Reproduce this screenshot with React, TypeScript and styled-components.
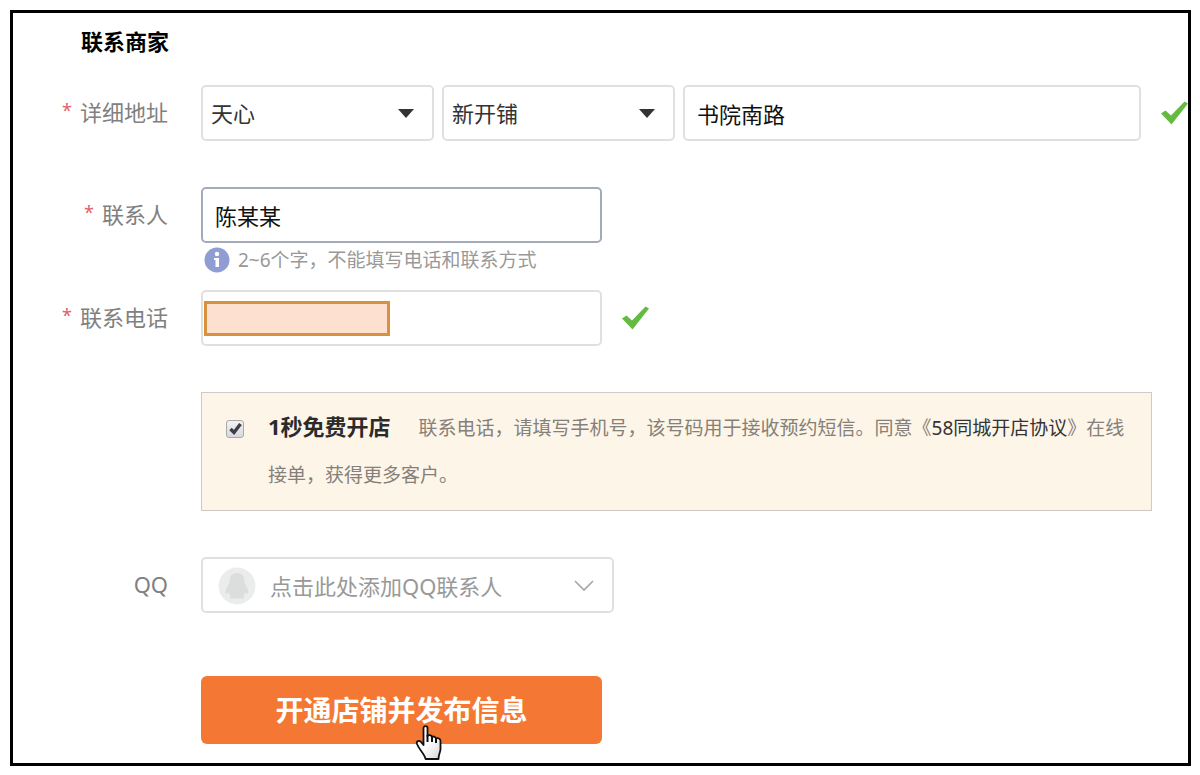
import React from "react";
import styled, { createGlobalStyle } from "styled-components";

const Global = createGlobalStyle`
  *, *::before, *::after { box-sizing: border-box; }
  body {
    margin: 0;
    background: #fff;
    font-family: "Noto Sans", "Noto Sans CJK SC", sans-serif;
    font-size: 22px;
    color: #333;
  }
  input, select, button { font-family: inherit; font-size: inherit; }
`;

const Frame = styled.main`
  margin: 10px 9px 9px 10px;
  padding-bottom: 19px;
  border: 3px solid #000;
`;

const Title = styled.h1`
  margin: 0 0 16px;
  padding-left: 68px;
  font-size: 22px;
  line-height: 56px;
  font-weight: 700;
  color: #000;
`;

const Row = styled.div<{ $after?: number }>`
  display: grid;
  grid-template-columns: 155px minmax(0, 1fr);
  column-gap: 33px;
  margin-bottom: ${(p) => p.$after ?? 46}px;
`;

const Label = styled.label`
  line-height: 54px;
  text-align: right;
  color: #808080;
`;

const Required = styled.span`
  margin-right: 8px;
  font-size: 18px;
  line-height: 1;
  vertical-align: 4px;
  color: #e0606c;
`;

const Controls = styled.div`
  display: flex;
  align-items: center;
  gap: 8px;
`;

const SelectBox = styled.div`
  display: grid;
  grid-template-columns: 1fr 16px;
  align-items: center;
  flex: 0 0 233px;
`;

const Select = styled.select`
  grid-area: 1 / 1 / 2 / 3;
  height: 56px;
  padding: 0 40px 0 8px;
  border: 2px solid #e0e0e0;
  border-radius: 5px;
  background: #fff;
  color: #333;
  appearance: none;
`;

const SelectArrow = styled.svg`
  grid-area: 1 / 2 / 2 / 3;
  justify-self: end;
  margin-right: 20px;
  pointer-events: none;
`;

const TextInput = styled.input<{ $active?: boolean; $wide?: boolean }>`
  width: ${(p) => (p.$wide ? "auto" : "401px")};
  flex: ${(p) => (p.$wide ? "1 1 0" : "0 0 401px")};
  min-width: 0;
  height: 56px;
  padding: 0 12px 1px;
  border: 2px solid ${(p) => (p.$active ? "#a3abbb" : "#e0e0e0")};
  border-radius: 5px;
  background: #fff;
  color: #111;
  outline: none;
`;

const Tick = styled.svg`
  flex: none;
  margin-left: 12px;
`;

const Hint = styled.p`
  display: flex;
  align-items: center;
  gap: 8px;
  margin: 0;
  padding-left: 3px;
  font-size: 19px;
  line-height: 34px;
  color: #999;
`;

const PhoneBox = styled.div`
  position: relative;
  display: flex;
`;

const Mask = styled.span`
  position: absolute;
  top: 11px;
  left: 3px;
  width: 186px;
  height: 35px;
  border: 3px solid #d8923e;
  background: #fee0d1;
`;

const Notice = styled.div`
  display: flex;
  margin-right: 36px;
  padding: 12px 24px 11px;
  border: 1px solid #d3c9c4;
  background: #fdf5e8;
`;

const CheckCell = styled.div`
  display: grid;
  place-items: center;
  width: 18px;
  height: 47px;
  margin-right: 24px;
  svg { grid-area: 1 / 1; pointer-events: none; display: none; }
  input:checked + svg { display: block; }
`;

const Checkbox = styled.input`
  grid-area: 1 / 1;
  width: 18px;
  height: 18px;
  margin: 0;
  border: 1px solid #a9a9ad;
  border-radius: 3px;
  background: linear-gradient(#f3f3f5, #d8d8de);
  appearance: none;
`;

const NoticeText = styled.p`
  flex: 1;
  margin: 0;
  font-size: 19px;
  line-height: 47px;
  color: #858079;
`;

const NoticeTitle = styled.label`
  margin-right: 28px;
  font-size: 22px;
  line-height: 1;
  font-weight: 700;
  color: #2b2b2b;
`;

const NoticeLink = styled.a`
  color: #333;
  text-decoration: none;
`;

const QQButton = styled.button`
  display: flex;
  align-items: center;
  width: 413px;
  height: 56px;
  padding: 2px 18px 0 15px;
  border: 2px solid #e0e0e0;
  border-radius: 5px;
  background: #fff;
  color: #999;
  text-align: left;
`;

const QQText = styled.span`
  flex: 1;
  margin-left: 14px;
  padding-bottom: 3px;
`;

const SubmitRow = styled.div`
  position: relative;
  width: 401px;
  margin-left: 188px;
`;

const Submit = styled.button`
  display: block;
  width: 100%;
  height: 68px;
  padding: 0 0 2px;
  border: 0;
  border-radius: 6px;
  background: #f47834;
  color: #fff;
  font-size: 28px;
  font-weight: 700;
`;

const Pointer = styled.svg`
  position: absolute;
  top: 49px;
  left: 214px;
  pointer-events: none;
`;

const Arrow = () => (
  <SelectArrow width="16" height="9" viewBox="0 0 16 9" aria-hidden="true">
    <path d="M0 0H16L8 9Z" fill="#333" />
  </SelectArrow>
);

const GreenTick = () => (
  <Tick width="27" height="24" viewBox="0 0 27 24" role="img" aria-label="正确">
    <path d="M0 12.500L4.500 9.500L10 14.500L23.500 0.500L27 2.500L10.500 23.500Z" fill="#65bb41" />
  </Tick>
);

export default function App() {
  return (
    <>
      <Global />
      <Frame>
        <Title>联系商家</Title>

        <Row>
          <Label htmlFor="district">
            <Required>*</Required>详细地址
          </Label>
          <Controls>
            <SelectBox>
              <Select id="district" defaultValue="天心">
                <option>天心</option>
              </Select>
              <Arrow />
            </SelectBox>
            <SelectBox>
              <Select aria-label="街道" defaultValue="新开铺">
                <option>新开铺</option>
              </Select>
              <Arrow />
            </SelectBox>
            <TextInput $wide aria-label="路名" defaultValue="书院南路" />
            <GreenTick />
          </Controls>
        </Row>

        <Row $after={13}>
          <Label htmlFor="contact">
            <Required>*</Required>联系人
          </Label>
          <div>
            <Controls>
              <TextInput id="contact" $active defaultValue="陈某某" />
            </Controls>
            <Hint>
              <svg width="26" height="26" viewBox="0 0 26 26" aria-hidden="true">
                <circle cx="13" cy="13" r="12.5" fill="#8f9dd4" />
                <circle cx="13" cy="7" r="2.2" fill="#fff" />
                <path d="M10 11H15V20H11.5V13H10Z" fill="#fff" />
              </svg>
              2~6个字，不能填写电话和联系方式
            </Hint>
          </div>
        </Row>

        <Row>
          <Label htmlFor="phone">
            <Required>*</Required>联系电话
          </Label>
          <Controls>
            <PhoneBox>
              <TextInput id="phone" type="tel" />
              <Mask />
            </PhoneBox>
            <GreenTick />
          </Controls>
        </Row>

        <Row>
          <span />
          <Notice>
            <CheckCell>
              <Checkbox id="open" type="checkbox" defaultChecked />
              <svg width="15" height="15" viewBox="0 0 15 15" aria-hidden="true">
                <path d="M2.5 8L6 11.5L12.5 3" fill="none" stroke="#3c3f45" strokeWidth="3.4" />
              </svg>
            </CheckCell>
            <NoticeText>
              <NoticeTitle htmlFor="open">1秒免费开店</NoticeTitle>
              联系电话，请填写手机号，该号码用于接收预约短信。同意《
              <NoticeLink href="#agreement">58同城开店协议</NoticeLink>
              》在线接单，获得更多客户。
            </NoticeText>
          </Notice>
        </Row>

        <Row $after={63}>
          <Label htmlFor="qq">QQ</Label>
          <Controls>
            <QQButton id="qq" type="button">
              <svg width="38" height="38" viewBox="0 0 38 38" aria-hidden="true">
                <circle cx="19" cy="19" r="18.5" fill="#ebedec" />
                <path
                  d="M19 6C13.500 6 11.500 10 11.500 14.500C11.500 17 8 21 7.500 25C7.500 27.500 9 27 10.500 25.500C11 27 12 28.500 13 29C11 30 11 31.500 13.500 31.500H24.500C27 31.500 27 30 25 29C26 28.500 27 27 27.500 25.500C29 27 30.500 27.500 30.500 25C30 21 26.500 17 26.500 14.500C26.500 10 24.500 6 19 6Z"
                  fill="#dcdedd"
                />
              </svg>
              <QQText>点击此处添加QQ联系人</QQText>
              <svg width="20" height="12" viewBox="0 0 20 12" aria-hidden="true">
                <path d="M1 1L10 10L19 1" fill="none" stroke="#a6a6a6" strokeWidth="1.6" />
              </svg>
            </QQButton>
          </Controls>
        </Row>

        <SubmitRow>
          <Submit type="button">开通店铺并发布信息</Submit>
          <Pointer width="28" height="36" viewBox="0 0 28 36" aria-hidden="true">
            <defs>
              <linearGradient id="hand" x1="0" y1="0" x2="1" y2="1">
                <stop offset="0.5" stopColor="#fff" />
                <stop offset="1" stopColor="#d4d4d4" />
              </linearGradient>
            </defs>
            <path
              d="M8.500 3C8.500 0.500 12.500 0.500 12.500 3V11C13.500 9.500 16.500 10 17 12C18 11 20.500 11.500 21 13.500C23 12.500 25.500 13.500 25.500 16V24C25.500 27 23.500 29 23.500 34H10.500C10 29.500 4 24.500 2 19C1 16 4 15 6 17L8.500 20Z"
              fill="url(#hand)"
              stroke="#111"
              strokeWidth="1.800"
              strokeLinejoin="round"
            />
            <path d="M12.500 10V17M17 12V17M21 13.500V18" stroke="#111" strokeWidth="2" />
          </Pointer>
        </SubmitRow>
      </Frame>
    </>
  );
}
